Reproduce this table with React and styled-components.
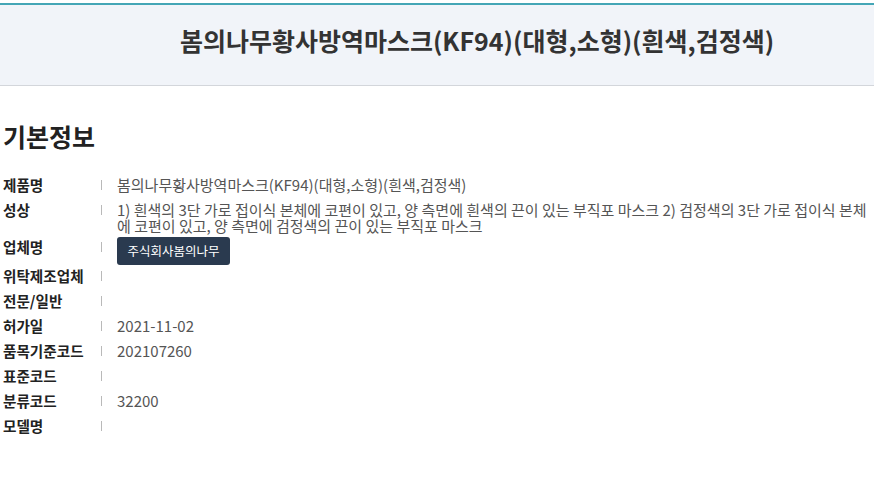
import React from 'react';
import styled, { createGlobalStyle } from 'styled-components';

const GlobalStyle = createGlobalStyle`
    body {
        margin: 0;
        background: #fff;
        font-family: 'Noto Sans CJK KR', 'Noto Sans', sans-serif;
    }
`;

// 상단 제목 영역
const TitleBar = styled.header`
    margin-top: 3px;
    border-top: 2px solid #44a6b6;
    border-bottom: 1px solid #d3d6db;
    background: #f1f4f9;
    height: 83px;
    display: flex;
    align-items: center;
    justify-content: center;
    padding-left: 80px;
    padding-bottom: 10px;
    box-sizing: border-box;
`;

const Title = styled.h1`
    margin: 0;
    font-size: 25px;
    font-weight: 700;
    color: #333;
`;

const Section = styled.section`
    padding: 0 3px;
`;

const SectionTitle = styled.h2`
    margin: 33px 0 19px;
    font-size: 25px;
    line-height: 34px;
    font-weight: 700;
    color: #222;
`;

const InfoList = styled.dl`
    margin: 0;
`;

const Row = styled.div`
    display: flex;
    align-items: flex-start;
    min-height: 25px;
`;

const Label = styled.dt`
    flex: 0 0 98px;
    position: relative;
    font-size: 14.6px;
    line-height: 25px;
    font-weight: 700;
    color: #222;

    /* 구분선 */
    &::after {
        content: '';
        position: absolute;
        left: 98px;
        top: 8px;
        width: 1px;
        height: 10px;
        background: #b9b9b9;
    }
`;

const Value = styled.dd`
    margin: 0 0 0 16px;
    flex: 1;
    padding-top: 4.5px;
    font-size: 15px;
    line-height: 16px;
    color: #555;
`;

const CompanyButton = styled.button`
    margin-top: -1.5px;
    margin-bottom: -1.5px;
    height: 28px;
    padding: 0 10.5px;
    border: 0;
    border-radius: 3px;
    background: #2a3a4f;
    color: #fff;
    font-family: inherit;
    font-size: 12.5px;
    cursor: pointer;
`;

const productName = '봄의나무황사방역마스크(KF94)(대형,소형)(흰색,검정색)';

const rows = [
    { label: '제품명', value: productName },
    {
        label: '성상',
        value: '1) 흰색의 3단 가로 접이식 본체에 코편이 있고, 양 측면에 흰색의 끈이 있는 부직포 마스크 2) 검정색의 3단 가로 접이식 본체에 코편이 있고, 양 측면에 검정색의 끈이 있는 부직포 마스크',
    },
    { label: '업체명', company: '주식회사봄의나무' },
    { label: '위탁제조업체' },
    { label: '전문/일반' },
    { label: '허가일', value: '2021-11-02' },
    { label: '품목기준코드', value: '202107260' },
    { label: '표준코드' },
    { label: '분류코드', value: '32200' },
    { label: '모델명' },
];

export default function App() {
    return (
        <>
            <GlobalStyle />
            <TitleBar>
                <Title>{productName}</Title>
            </TitleBar>
            <Section>
                <SectionTitle>기본정보</SectionTitle>
                <InfoList>
                    {rows.map((row) => (
                        <Row key={row.label}>
                            <Label>{row.label}</Label>
                            <Value>
                                {row.company ? (
                                    <CompanyButton>{row.company}</CompanyButton>
                                ) : (
                                    row.value
                                )}
                            </Value>
                        </Row>
                    ))}
                </InfoList>
            </Section>
        </>
    );
}
